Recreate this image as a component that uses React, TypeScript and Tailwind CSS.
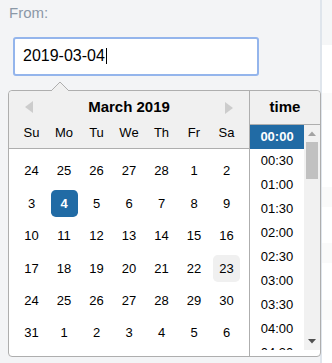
import React from "react";

const weeks: number[][] = [
  [24, 25, 26, 27, 28, 1, 2],
  [3, 4, 5, 6, 7, 8, 9],
  [10, 11, 12, 13, 14, 15, 16],
  [17, 18, 19, 20, 21, 22, 23],
  [24, 25, 26, 27, 28, 29, 30],
  [31, 1, 2, 3, 4, 5, 6],
];
const dayNames = ["Su", "Mo", "Tu", "We", "Th", "Fr", "Sa"];
const times = ["00:00", "00:30", "01:00", "01:30", "02:00", "02:30", "03:00", "03:30", "04:00", "04:30"];

export default function App() {
  return (
    <div
      className="flex w-[332px] h-[363px] overflow-hidden text-black"
      style={{ fontFamily: '"Liberation Sans", Arial, sans-serif' }}
    >
      <div className="relative w-[320px] h-full bg-[#f3f4f6] flex flex-col">
        <div className="pl-[9px] pt-[4px] text-[15px] leading-[18px] text-[#8b98a7]">From:</div>
        <div className="ml-[13px] mt-[15px] w-[246px] h-[39px] border-2 border-[#94b5ec] rounded-[3px] bg-white flex items-center pl-[8px] pb-[2px] text-[16px]">
          <span>2019-03-04</span>
          <span className="ml-[1px] w-[1px] h-[16px] bg-black" />
        </div>
        <div className="relative z-10 ml-[8px] mt-[14px] w-[313px] h-[267px] border border-[#aeaeae] rounded-[4px] bg-white flex">
          {/* pointer triangle */}
          <svg className="absolute left-[41px] top-[-10px]" width="20" height="11" viewBox="0 0 20 11">
            <polygon points="0.5,10.5 10,1 19.5,10.5" fill="#f0f0f0" />
            <polyline points="0.5,10.5 10,1 19.5,10.5" fill="none" stroke="#aeaeae" strokeWidth="1" />
          </svg>
          {/* calendar */}
          <div className="w-[240px] flex flex-col">
            <div className="relative h-[58px] bg-[#f0f0f0] border-b border-[#aeaeae] rounded-tl-[4px] pt-[6px]">
              <svg className="absolute left-[16px] top-[10px]" width="8" height="12" viewBox="0 0 8 12">
                <polygon points="8,0 0,6 8,12" fill="#cccccc" />
              </svg>
              <svg className="absolute left-[216px] top-[11px]" width="8" height="12" viewBox="0 0 8 12">
                <polygon points="0,0 8,6 0,12" fill="#cccccc" />
              </svg>
              <div className="h-[20px] leading-[20px] text-center font-bold text-[15px]">March 2019</div>
              <div className="mt-[2px] flex justify-center">
                {dayNames.map((d) => (
                  <div key={d} className="w-[27px] h-[27px] mx-[2.75px] flex items-center justify-center text-[13px]">
                    {d}
                  </div>
                ))}
              </div>
            </div>
            <div className="pt-[6px] flex flex-col">
              {weeks.map((w, wi) => (
                <div key={wi} className="flex justify-center">
                  {w.map((d, di) => {
                    const selected = wi === 1 && d === 4;
                    const kb = wi === 3 && d === 23;
                    return (
                      <div
                        key={di}
                        className={
                          "w-[27px] h-[27px] mx-[2.75px] my-[2.7px] flex items-center justify-center text-[13px] rounded-[4.8px] " +
                          (selected ? "bg-[#216ba5] text-white font-bold" : kb ? "bg-[#f0f0f0]" : "")
                        }
                      >
                        {d}
                      </div>
                    );
                  })}
                </div>
              ))}
            </div>
          </div>
          {/* time */}
          <div className="w-[71px] border-l border-[#aeaeae] flex flex-col">
            <div className="h-[34px] bg-[#f0f0f0] border-b border-[#aeaeae] rounded-tr-[4px] flex items-center justify-center font-bold text-[15px]">
              time
            </div>
            <div className="h-[225px] flex">
              <div className="w-[54px] h-full overflow-hidden flex flex-col">
                {times.map((t, i) => (
                  <div
                    key={t}
                    className={
                      "h-[24px] shrink-0 flex items-center justify-center text-[13px] " +
                      (i === 0 ? "bg-[#216ba5] text-white font-bold" : "")
                    }
                  >
                    {t}
                  </div>
                ))}
              </div>
              <div className="w-[16px] h-full bg-[#f1f1f1] flex flex-col">
                <div className="h-[17px] flex items-center justify-center">
                  <svg width="8" height="5" viewBox="0 0 8 5">
                    <polygon points="0,5 4,0.5 8,5" fill="#a3a3a3" />
                  </svg>
                </div>
                <div className="mx-[2px] h-[37px] bg-[#c1c1c1]" />
                <div className="flex-1" />
                <div className="h-[17px] flex items-center justify-center">
                  <svg width="8" height="5" viewBox="0 0 8 5">
                    <polygon points="0,0 8,0 4,4.5" fill="#505050" />
                  </svg>
                </div>
              </div>
            </div>
          </div>
        </div>
      </div>
      <div className="w-[2px] h-full bg-[#dfe5ec]" />
      <div className="w-[10px] h-full bg-white flex flex-col">
        <div className="h-[45px] bg-[#f5f6f7]" />
        <div className="h-[48px]" />
        <div className="h-[17px] bg-[#fafafa]" />
        <div className="h-[77px]" />
        <div className="h-[20px] bg-[#fafafa]" />
        <div className="h-[36px]" />
        <div className="h-[20px] bg-[#fafafa]" />
        <div className="h-[37px]" />
        <div className="h-[20px] bg-[#fafafa]" />
      </div>
    </div>
  );
}
